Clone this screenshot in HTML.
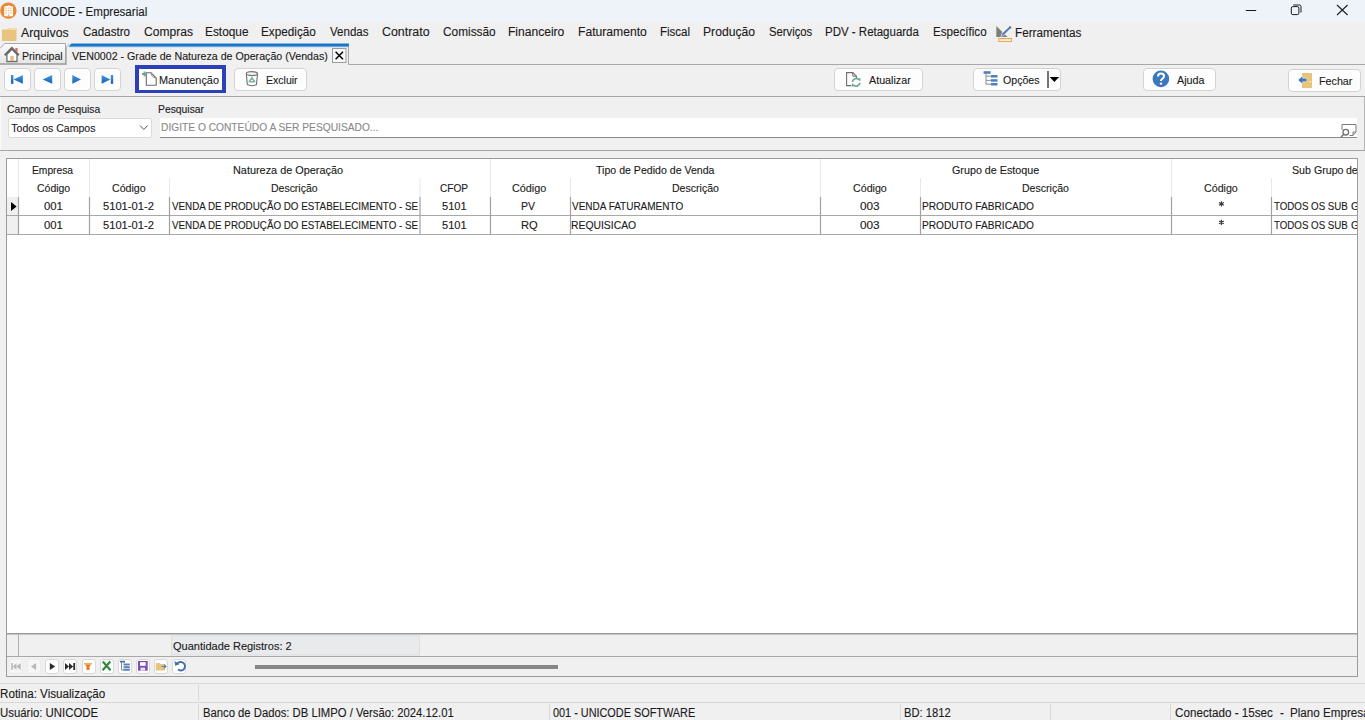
<!DOCTYPE html>
<html><head><meta charset="utf-8"><title>UNICODE - Empresarial</title>
<style>
html,body{margin:0;padding:0;}
body{width:1365px;height:720px;overflow:hidden;position:relative;background:#f0f0f0;font-family:"Liberation Sans",sans-serif;}
.a{position:absolute;box-sizing:border-box;}
.t{position:absolute;white-space:nowrap;line-height:1;transform-origin:0 0;-webkit-text-stroke:0.12px currentColor;}
.btn{position:absolute;box-sizing:border-box;background:#fdfdfd;border:1px solid #d3d3d3;border-radius:4px;}
.nb{position:absolute;box-sizing:border-box;background:#fff;border:1px solid #d8d8d8;border-radius:3px;top:659px;height:15px;width:14px;}
svg{position:absolute;overflow:visible;}
</style></head><body>
<!-- title bar -->
<div class="a" style="left:0;top:0;width:1365px;height:22px;background:#eef2f9"></div>
<svg style="left:0;top:0" width="18" height="22" viewBox="0 0 18 22">
 <circle cx="8.4" cy="10.6" r="8.2" fill="#ea8a2c"/>
 <path d="M4.2 16.2 V6.4 L8.6 5.6 L13 6.4 V16.2 Z" fill="#fff"/>
 <g fill="#f2b77e"><rect x="5.3" y="7.6" width="1.5" height="1.1"/><rect x="7.8" y="7.6" width="1.5" height="1.1"/><rect x="10.3" y="7.6" width="1.5" height="1.1"/><rect x="5.3" y="10" width="1.5" height="1.1"/><rect x="7.8" y="10" width="1.5" height="1.1"/><rect x="10.3" y="10" width="1.5" height="1.1"/><rect x="5.3" y="12.4" width="1.5" height="1.1"/><rect x="7.8" y="12.4" width="1.5" height="1.1"/><rect x="10.3" y="12.4" width="1.5" height="1.1"/><rect x="7.7" y="14.4" width="1.8" height="1.8"/></g>
</svg>
<svg style="left:1240px;top:0" width="125" height="22" viewBox="0 0 125 22">
 <line x1="5.8" y1="10.5" x2="16.2" y2="10.5" stroke="#1a1a1a" stroke-width="1"/>
 <rect x="51.3" y="6.6" width="7.6" height="8" rx="1.5" fill="none" stroke="#1a1a1a" stroke-width="1"/>
 <path d="M53.3 5 H59.5 Q61 5 61 6.5 V12.5" fill="none" stroke="#1a1a1a" stroke-width="1"/>
 <path d="M97 5 L107.6 15 M107.6 5 L97 15" stroke="#1a1a1a" stroke-width="1.05"/>
</svg>
<!-- menu bar -->
<div class="a" style="left:0;top:22px;width:1365px;height:21px;background:#f0f0f0"></div>
<svg style="left:2px;top:27px" width="16" height="15" viewBox="0 0 16 15">
 <path d="M0 2.5 H5.5 L7 1 H14.5 V14 H0 Z" fill="#e9c47f"/>
 <rect x="7" y="1" width="7.5" height="2" fill="#f3dcaa"/>
</svg>
<svg style="left:990px;top:22px" width="24" height="22" viewBox="0 0 24 22">
 <path d="M6.3 4 V15 H17.5 Z" fill="#7d7d7d"/>
 <path d="M10.4 15 L12 10.4 L19.3 3.6 Q20.6 3 21.6 4.2 Q22.2 5.4 21.3 6.4 L14.2 13.6 Z" fill="#fff" opacity="0.8"/>
 <path d="M11.5 14.2 L12.6 11 L19.6 4.4 Q20.6 4 21 4.8 Q21.4 5.6 20.6 6.3 L13.8 13 Z" fill="#4f7fb5"/>
 <path d="M19.3 4.6 L21.2 6.3" stroke="#5f7894" stroke-width="1.4"/>
 <rect x="8.8" y="16.5" width="12.6" height="3" fill="#fdf2c6" stroke="#e9a462" stroke-width="1"/>
 <path d="M11 16.5 V17.5 M13.5 16.5 V17.5 M16 16.5 V17.5 M18.5 16.5 V17.5" stroke="#e9a462" stroke-width="0.8"/>
</svg>
<!-- tab strip -->
<svg style="left:0;top:42px" width="1365" height="24" viewBox="0 0 1365 24">
 <defs><linearGradient id="tg" x1="0" y1="0" x2="0" y2="1"><stop offset="0" stop-color="#fbfbfb"/><stop offset="1" stop-color="#e4e4e4"/></linearGradient></defs>
 <path d="M0 22.5 V6.5 L4.7 1.3 H65.5 V22.5 Z" fill="url(#tg)"/>
 <path d="M0 6.5 L4.7 1.5 H65.5 V22.5" fill="none" stroke="#a8a8a8" stroke-width="1"/>
 <line x1="0" y1="22" x2="67" y2="22" stroke="#9a9a9a" stroke-width="1.6"/>
 <path d="M66.5 22.5 V5 L70 1.5" fill="none" stroke="#b8b8b8" stroke-width="1"/>
 <path d="M68.5 4.8 L71.5 1.5 H349 V4.8 Z" fill="#1976c9"/>
 <line x1="70" y1="5.3" x2="348.5" y2="5.3" stroke="#cfe3f5" stroke-width="1"/>
 <line x1="348.5" y1="4" x2="348.5" y2="22.5" stroke="#a8a8a8" stroke-width="1"/>
 <line x1="348.5" y1="22.5" x2="1365" y2="22.5" stroke="#a8a8a8" stroke-width="1"/>
 <!-- close box -->
 <rect x="332.5" y="6.5" width="13.5" height="14" fill="#f7f7f7" stroke="#9c9c9c" stroke-width="1"/>
 <path d="M335.6 9.8 L343 17.2 M343 9.8 L335.6 17.2" stroke="#000" stroke-width="1.5"/>
</svg>
<svg style="left:4px;top:46px" width="17" height="17" viewBox="0 0 17 17">
 <rect x="11.3" y="2" width="2.3" height="3.6" fill="#d9715a"/>
 <path d="M2.9 8.3 V15.5 H13 V8.3 L7.9 3.2 Z" fill="#fff" stroke="#707070" stroke-width="1.3"/>
 <path d="M0.8 9.3 L7.8 2 L14.8 9.3" fill="none" stroke="#6a6a6a" stroke-width="2.1"/>
 <rect x="6.3" y="10" width="3.4" height="5" fill="#e3bd83"/>
</svg>
<!-- toolbar -->
<div class="a" style="left:0;top:96px;width:1365px;height:1px;background:#a5a5a5"></div>
<div class="btn" style="left:4px;top:68px;width:27px;height:23px"></div>
<div class="btn" style="left:34px;top:68px;width:27px;height:23px"></div>
<div class="btn" style="left:64px;top:68px;width:27px;height:23px"></div>
<div class="btn" style="left:94px;top:68px;width:27px;height:23px"></div>
<svg style="left:0;top:64px" width="125" height="32" viewBox="0 0 125 32">
 <defs><linearGradient id="bg1" x1="0" y1="0" x2="0" y2="1"><stop offset="0" stop-color="#4a97e0"/><stop offset="1" stop-color="#0f5fb8"/></linearGradient></defs>
 <g fill="url(#bg1)">
 <rect x="11" y="11" width="2.4" height="8.8"/><path d="M13.6 15.4 L22.9 11 V19.8 Z"/>
 <path d="M42.6 15.4 L52.2 11 V19.8 Z"/>
 <path d="M81 15.4 L72.3 11 V19.8 Z"/>
 <path d="M110.3 15.4 L101.6 11 V19.8 Z"/><rect x="110.8" y="11" width="2.4" height="8.8"/>
 </g>
</svg>
<div class="a" style="left:135px;top:65px;width:91px;height:28px;border:4px solid #2e40b8;border-bottom-width:3.5px;background:#fff"></div>
<svg style="left:140px;top:70px" width="18" height="18" viewBox="0 0 18 18">
 <path d="M6.3 2.8 H11 L16.2 8 V15.2 H6.3 Z" fill="#fff" stroke="#6a6a6a" stroke-width="1.1"/>
 <path d="M11 2.8 Q11.3 7.6 16.2 8" fill="none" stroke="#8a8a8a" stroke-width="0.9"/>
 <path d="M4.6 1.4 V6.6 M2 4 H7.2" stroke="#6aa98c" stroke-width="1.9"/>
</svg>
<div class="btn" style="left:234px;top:68px;width:73px;height:23px"></div>
<svg style="left:244px;top:70px" width="16" height="18" viewBox="0 0 16 18">
 <path d="M2.3 3.8 L3.3 14.6 Q7.9 16.8 12.5 14.6 L13.5 3.8" fill="#fff" stroke="#707070" stroke-width="1.1"/>
 <ellipse cx="7.9" cy="3.6" rx="5.6" ry="2" fill="#f4f4f4" stroke="#707070" stroke-width="1.1"/>
 <path d="M7.9 7.6 L10.6 11.8 H5.2 Z" fill="#e9f6f0" stroke="#82b7a1" stroke-width="1.6" stroke-linejoin="round"/>
</svg>
<div class="btn" style="left:834px;top:68px;width:89px;height:23px"></div>
<svg style="left:844px;top:70px" width="19" height="18" viewBox="0 0 19 18">
 <path d="M7.5 15.6 H2.6 V2.6 H8.8 L12.4 6.2 V8.5" fill="#fff" stroke="#6d6d6d" stroke-width="1.1"/>
 <path d="M8.8 2.6 V6.2 H12.4" fill="none" stroke="#6d6d6d" stroke-width="1"/>
 <path d="M8.4 11.8 A3.8 3.8 0 0 1 14.8 9.6" fill="none" stroke="#6aa98c" stroke-width="1.7"/>
 <path d="M13.2 8.4 L16.6 8.2 L16.2 11.6 Z" fill="#6aa98c"/>
 <path d="M16 12.8 A3.8 3.8 0 0 1 9.6 15" fill="none" stroke="#6aa98c" stroke-width="1.7"/>
 <path d="M11.2 16.2 L7.8 16.4 L8.2 13 Z" fill="#6aa98c"/>
</svg>
<div class="btn" style="left:973px;top:68px;width:88px;height:23px"></div>
<svg style="left:980px;top:70px" width="19" height="18" viewBox="0 0 19 18">
 <rect x="3.6" y="1.2" width="7" height="2.6" fill="#4a82bf"/>
 <path d="M6 3.8 V14.2 H10.9 M6 6.2 H10.9 M6 10.4 H10.9" fill="none" stroke="#8c8c8c" stroke-width="1"/>
 <rect x="10.9" y="5" width="6.6" height="2.5" fill="#4a82bf"/>
 <rect x="10.9" y="9.2" width="6.6" height="2.5" fill="#4a82bf"/>
 <rect x="10.9" y="13" width="6.6" height="2.5" fill="#4a82bf"/>
</svg>
<div class="a" style="left:1047px;top:71px;width:2px;height:16.6px;background:#747474"></div>
<svg style="left:1049px;top:76px" width="12" height="8" viewBox="0 0 12 8">
 <path d="M0.7 1.1 H10.1 L5.4 6 Z" fill="#000"/>
</svg>
<div class="btn" style="left:1143px;top:68px;width:73px;height:23px"></div>
<svg style="left:1152px;top:70px" width="18" height="18" viewBox="0 0 18 18">
 <circle cx="8.9" cy="8.9" r="8.3" fill="#3b78bd"/>
 <path d="M6 6.6 Q6 3.6 9 3.6 Q12 3.6 12 6.3 Q12 8 10 9 Q9 9.6 9 11" fill="none" stroke="#fff" stroke-width="2"/>
 <circle cx="9" cy="13.6" r="1.2" fill="#fff"/>
</svg>
<div class="btn" style="left:1288px;top:69px;width:73px;height:23px"></div>
<svg style="left:1297px;top:72px" width="17" height="17" viewBox="0 0 17 17">
 <rect x="5" y="1" width="10" height="15" fill="#e8c47a"/>
 <rect x="12.6" y="9.2" width="1.2" height="1.2" fill="#fff"/>
 <path d="M1.2 8 L5.4 4.2 V6.4 H9.6 V9.6 H5.4 V11.8 Z" fill="#4177b5" stroke="#fff" stroke-width="0.9" paint-order="stroke"/>
</svg>
<!-- search panel -->
<div class="a" style="left:0;top:97px;width:1px;height:53px;background:#fafafa"></div>
<div class="a" style="left:1364px;top:97px;width:1px;height:53px;background:#b4b4b4"></div>
<div class="a" style="left:0;top:150px;width:1365px;height:1px;background:#a5a5a5"></div>
<div class="a" style="left:8px;top:118px;width:144px;height:20px;background:#fff;border:1px solid #dadada;border-radius:2px"></div>
<svg style="left:138px;top:123px" width="12" height="9" viewBox="0 0 12 9">
 <path d="M2 2.5 L5.8 6.5 L9.6 2.5" fill="none" stroke="#555" stroke-width="1"/>
</svg>
<div class="a" style="left:160px;top:118px;width:1197px;height:20px;background:#fff;border-bottom:1px solid #8a8a8a"></div>
<svg style="left:1339px;top:122px" width="19" height="16" viewBox="0 0 19 16">
 <path d="M3 8 V2.5 H17 V10 L14 13.5 H10.5" fill="none" stroke="#7a7a7a" stroke-width="1"/>
 <path d="M17 10 H14 V13.5" fill="none" stroke="#7a7a7a" stroke-width="1"/>
 <circle cx="6.8" cy="10.2" r="2.8" fill="none" stroke="#707070" stroke-width="1.3"/>
 <path d="M4.8 12.2 L2 15" stroke="#707070" stroke-width="1.5"/>
</svg>
<!-- grid -->
<div class="a" style="left:6px;top:158px;width:1352px;height:519px;border:1px solid #9b9b9b;background:#fff"></div>
<svg style="left:0;top:0" width="1365" height="720" viewBox="0 0 1365 720">
 <!-- header dividers -->
 <g stroke="#e8e8e8" stroke-width="1">
  <line x1="18.5" y1="159" x2="18.5" y2="197"/>
  <line x1="89.5" y1="159" x2="89.5" y2="197"/>
  <line x1="490.5" y1="159" x2="490.5" y2="197"/>
  <line x1="820.5" y1="159" x2="820.5" y2="197"/>
  <line x1="1171.5" y1="159" x2="1171.5" y2="197"/>
  <line x1="169.5" y1="178" x2="169.5" y2="197"/>
  <line x1="420" y1="178" x2="420" y2="197"/>
  <line x1="570.5" y1="178" x2="570.5" y2="197"/>
  <line x1="920.5" y1="178" x2="920.5" y2="197"/>
  <line x1="1271.5" y1="178" x2="1271.5" y2="197"/>
 </g>
 <rect x="7" y="197" width="11" height="37" fill="#f0f0f0"/>
 <g stroke="#a8a8a8" stroke-width="1">
  <line x1="7" y1="215.5" x2="1357" y2="215.5"/>
  <line x1="7" y1="234.5" x2="1357" y2="234.5"/>
 </g>
 <g stroke="#a0a0a0" stroke-width="1.2">
  <line x1="18.5" y1="197" x2="18.5" y2="234"/>
  <line x1="89.5" y1="197" x2="89.5" y2="234"/>
  <line x1="169.5" y1="197" x2="169.5" y2="234"/>
  <line x1="420" y1="197" x2="420" y2="234"/>
  <line x1="490.5" y1="197" x2="490.5" y2="234"/>
  <line x1="570.5" y1="197" x2="570.5" y2="234"/>
  <line x1="820.5" y1="197" x2="820.5" y2="234"/>
  <line x1="920.5" y1="197" x2="920.5" y2="234"/>
  <line x1="1171.5" y1="197" x2="1171.5" y2="234"/>
  <line x1="1271.5" y1="197" x2="1271.5" y2="234"/>
 </g>
 <path d="M11 202 L16.6 206.5 L11 211 Z" fill="#000"/>
 <g stroke="#333" stroke-width="1.1"><path d="M1221.4 201.3 V206.6 M1219 202.6 L1223.8 205.3 M1219 205.3 L1223.8 202.6"/>
 <path d="M1221.4 219.7 V225 M1219 221 L1223.8 223.7 M1219 223.7 L1223.8 221"/></g>
 <!-- footer -->
 <rect x="7" y="634" width="1350" height="42" fill="#f0f0f0"/>
 <line x1="7" y1="633.8" x2="1357" y2="633.8" stroke="#9a9a9a" stroke-width="1.6"/>
 <line x1="18.5" y1="634" x2="18.5" y2="656" stroke="#b0b0b0" stroke-width="1"/>
 <rect x="171.5" y="636" width="248" height="19" fill="#e8eaec" stroke="#dcdfe2" stroke-width="1"/>
 <line x1="7" y1="656.5" x2="1357" y2="656.5" stroke="#a8a8a8" stroke-width="1"/>
 <rect x="255" y="665" width="303" height="4" fill="#878787"/>
</svg>
<!-- nav buttons bottom -->
<div class="nb" style="left:9px;border-color:#ececec;background:#f6f6f6"></div>
<div class="nb" style="left:27px;border-color:#ececec;background:#f6f6f6"></div>
<div class="nb" style="left:45px"></div>
<div class="nb" style="left:63px"></div>
<div class="nb" style="left:81.5px"></div>
<div class="nb" style="left:99.5px"></div>
<div class="nb" style="left:117.5px"></div>
<div class="nb" style="left:135.5px"></div>
<div class="nb" style="left:154px"></div>
<div class="nb" style="left:172px"></div>
<svg style="left:0;top:656px" width="200" height="20" viewBox="0 0 200 20">
 <g fill="#b8b8b8"><rect x="11.2" y="7" width="1.6" height="7"/><path d="M12.8 10.5 L16.5 7 V14 Z M16.5 10.5 L20.7 7 V14 Z"/>
 <path d="M31 10.5 L36.1 7 V14 Z"/></g>
 <g fill="#2b2b2b"><path d="M55.2 10.5 L49.8 7 V14 Z"/>
 <path d="M69 10.5 L65 7 V14 Z M73.2 10.5 L69 7 V14 Z"/><rect x="73.3" y="7" width="1.8" height="7"/></g>
 <path d="M83.8 7 H92.2 L89.5 10.5 V14 H86.5 V10.5 Z" fill="#e8791c"/>
 <rect x="84.5" y="7.3" width="7" height="1.3" fill="#f7c27a"/>
 <path d="M102.8 5.5 L110.5 14.3 M110.3 5.5 L102.6 14.3" stroke="#2e8b3c" stroke-width="2.2"/>
 <rect x="120" y="4.8" width="5" height="1.8" fill="#3e72b0"/>
 <path d="M121.5 6.5 V14 H124" fill="none" stroke="#8a8a8a" stroke-width="1"/>
 <g fill="#5b86bd"><rect x="123.5" y="7.5" width="6.3" height="2"/><rect x="123.5" y="10.2" width="6.3" height="2"/><rect x="123.5" y="12.8" width="6.3" height="2"/></g>
 <rect x="138" y="5" width="9.7" height="9.7" fill="#7b4fae"/>
 <rect x="140" y="6.2" width="5.7" height="3.6" fill="#fff"/>
 <rect x="140.5" y="11.6" width="4.6" height="3.1" fill="#e9dcf5"/>
 <path d="M155.8 7 H159.5 L160.5 8 H165 V14.5 H155.8 Z" fill="#e8c47e"/>
 <path d="M161.5 10.5 L166 10.5 M164.2 8.6 L166 10.5 L164.2 12.4" stroke="#5b7fb0" stroke-width="1.2" fill="none"/>
 <path d="M176.8 8.4 A4.3 4.3 0 1 1 178 13.6" fill="none" stroke="#3f6fae" stroke-width="1.9"/>
 <path d="M174.5 5 L175.2 9.8 L179.6 8.2 Z" fill="#3f6fae"/>
</svg>
<!-- status bar -->
<div class="a" style="left:0;top:683px;width:1365px;height:1px;background:#d9d9d9"></div>
<div class="a" style="left:0;top:702px;width:1365px;height:1px;background:#d9d9d9"></div>
<div class="a" style="left:198px;top:685px;width:1px;height:16px;background:#d9d9d9"></div>
<div class="a" style="left:198px;top:704px;width:1px;height:16px;background:#d9d9d9"></div>
<div class="a" style="left:549px;top:704px;width:1px;height:16px;background:#d9d9d9"></div>
<div class="a" style="left:900px;top:704px;width:1px;height:16px;background:#d9d9d9"></div>
<div class="a" style="left:1050px;top:704px;width:1px;height:16px;background:#d9d9d9"></div>
<div class="a" style="left:1170px;top:704px;width:1px;height:16px;background:#d9d9d9"></div>
<span class="t" style="left:21.54px;top:6.24px;font-size:12px;color:#1b1b1b;transform:scaleX(0.9630)">UNICODE - Empresarial</span>
<span class="t" style="left:20.50px;top:26.84px;font-size:12px;color:#1b1b1b;transform:scaleX(1.0205)">Arquivos</span>
<span class="t" style="left:82.52px;top:26.34px;font-size:12px;color:#1b1b1b;transform:scaleX(0.9634)">Cadastro</span>
<span class="t" style="left:143.50px;top:26.34px;font-size:12px;color:#1b1b1b;transform:scaleX(1.0052)">Compras</span>
<span class="t" style="left:205.01px;top:26.34px;font-size:12px;color:#1b1b1b;transform:scaleX(0.9882)">Estoque</span>
<span class="t" style="left:261.32px;top:26.34px;font-size:12px;color:#1b1b1b;transform:scaleX(0.9798)">Expedição</span>
<span class="t" style="left:330.10px;top:26.34px;font-size:12px;color:#1b1b1b;transform:scaleX(0.9610)">Vendas</span>
<span class="t" style="left:381.98px;top:26.34px;font-size:12px;color:#1b1b1b;transform:scaleX(1.0333)">Contrato</span>
<span class="t" style="left:443.01px;top:26.34px;font-size:12px;color:#1b1b1b;transform:scaleX(0.9867)">Comissão</span>
<span class="t" style="left:508.49px;top:26.34px;font-size:12px;color:#1b1b1b;transform:scaleX(1.0055)">Financeiro</span>
<span class="t" style="left:578.09px;top:26.34px;font-size:12px;color:#1b1b1b;transform:scaleX(1.0120)">Faturamento</span>
<span class="t" style="left:660.24px;top:26.34px;font-size:12px;color:#1b1b1b;transform:scaleX(0.9593)">Fiscal</span>
<span class="t" style="left:703.19px;top:26.34px;font-size:12px;color:#1b1b1b;transform:scaleX(1.0120)">Produção</span>
<span class="t" style="left:769.03px;top:26.34px;font-size:12px;color:#1b1b1b;transform:scaleX(0.9400)">Serviços</span>
<span class="t" style="left:825.04px;top:26.34px;font-size:12px;color:#1b1b1b;transform:scaleX(0.9577)">PDV - Retaguarda</span>
<span class="t" style="left:932.93px;top:26.34px;font-size:12px;color:#1b1b1b;transform:scaleX(0.9685)">Específico</span>
<span class="t" style="left:1015.03px;top:26.84px;font-size:12px;color:#1b1b1b;transform:scaleX(0.9744)">Ferramentas</span>
<span class="t" style="left:22.04px;top:51.49px;font-size:11px;color:#1b1b1b;transform:scaleX(0.9630)">Principal</span>
<span class="t" style="left:72.00px;top:51.09px;font-size:11px;color:#1b1b1b;transform:scaleX(0.9685)">VEN0002 - Grade de Natureza de Operação (Vendas)</span>
<span class="t" style="left:159.41px;top:75.19px;font-size:11px;color:#1b1b1b;transform:scaleX(0.9907)">Manutenção</span>
<span class="t" style="left:265.54px;top:75.19px;font-size:11px;color:#1b1b1b;transform:scaleX(0.9575)">Excluir</span>
<span class="t" style="left:869.00px;top:75.19px;font-size:11px;color:#1b1b1b;transform:scaleX(0.9754)">Atualizar</span>
<span class="t" style="left:1002.72px;top:75.19px;font-size:11px;color:#1b1b1b;transform:scaleX(0.9649)">Opções</span>
<span class="t" style="left:1176.80px;top:75.19px;font-size:11px;color:#1b1b1b;transform:scaleX(0.9770)">Ajuda</span>
<span class="t" style="left:1319.22px;top:75.99px;font-size:11px;color:#1b1b1b;transform:scaleX(0.9758)">Fechar</span>
<span class="t" style="left:6.76px;top:103.81px;font-size:10.5px;color:#1b1b1b;transform:scaleX(0.9856)">Campo de Pesquisa</span>
<span class="t" style="left:158.06px;top:103.81px;font-size:10.5px;color:#1b1b1b;transform:scaleX(0.9858)">Pesquisar</span>
<span class="t" style="left:11.35px;top:122.81px;font-size:10.5px;color:#1b1b1b;transform:scaleX(1.0000)">Todos os Campos</span>
<span class="t" style="left:160.67px;top:122.31px;font-size:10.5px;color:#8a8a8a;transform:scaleX(0.9727)">DIGITE O CONTEÚDO A SER PESQUISADO...</span>
<span class="t" style="left:32.27px;top:164.51px;font-size:10.5px;color:#1b1b1b;transform:scaleX(0.9770)">Empresa</span>
<span class="t" style="left:233.42px;top:164.51px;font-size:10.5px;color:#1b1b1b;transform:scaleX(1.0362)">Natureza de Operação</span>
<span class="t" style="left:596.15px;top:164.51px;font-size:10.5px;color:#1b1b1b;transform:scaleX(1.0081)">Tipo de Pedido de Venda</span>
<span class="t" style="left:952.29px;top:164.51px;font-size:10.5px;color:#1b1b1b;transform:scaleX(1.0231)">Grupo de Estoque</span>
<span class="t" style="left:1292.19px;top:164.51px;font-size:10.5px;color:#1b1b1b;transform:scaleX(1.0140)">Sub Grupo</span>
<span class="t" style="left:36.90px;top:182.91px;font-size:10.5px;color:#1b1b1b;transform:scaleX(0.9969)">Código</span>
<span class="t" style="left:111.59px;top:182.91px;font-size:10.5px;color:#1b1b1b;transform:scaleX(1.0123)">Código</span>
<span class="t" style="left:512.28px;top:182.91px;font-size:10.5px;color:#1b1b1b;transform:scaleX(1.0308)">Código</span>
<span class="t" style="left:853.39px;top:182.91px;font-size:10.5px;color:#1b1b1b;transform:scaleX(1.0154)">Código</span>
<span class="t" style="left:1204.19px;top:182.91px;font-size:10.5px;color:#1b1b1b;transform:scaleX(1.0154)">Código</span>
<span class="t" style="left:270.75px;top:182.91px;font-size:10.5px;color:#1b1b1b;transform:scaleX(0.9978)">Descrição</span>
<span class="t" style="left:671.55px;top:182.91px;font-size:10.5px;color:#1b1b1b;transform:scaleX(1.0044)">Descrição</span>
<span class="t" style="left:1022.45px;top:182.91px;font-size:10.5px;color:#1b1b1b;transform:scaleX(1.0044)">Descrição</span>
<span class="t" style="left:440.32px;top:182.91px;font-size:10.5px;color:#1b1b1b;transform:scaleX(0.9628)">CFOP</span>
<span class="t" style="left:43.66px;top:201.21px;font-size:10.5px;color:#1b1b1b;transform:scaleX(1.0788)">001</span>
<span class="t" style="left:103.47px;top:201.21px;font-size:10.5px;color:#1b1b1b;transform:scaleX(1.0631)">5101-01-2</span>
<span class="t" style="left:172.00px;top:201.21px;font-size:10.5px;color:#1b1b1b;transform:scaleX(0.9346)">VENDA DE PRODUÇÃO DO ESTABELECIMENTO - SE</span>
<span class="t" style="left:441.87px;top:201.21px;font-size:10.5px;color:#1b1b1b;transform:scaleX(1.0533)">5101</span>
<span class="t" style="left:860.44px;top:201.21px;font-size:10.5px;color:#1b1b1b;transform:scaleX(1.1212)">003</span>
<span class="t" style="left:922.48px;top:201.21px;font-size:10.5px;color:#1b1b1b;transform:scaleX(0.9656)">PRODUTO FABRICADO</span>
<span class="t" style="left:1273.77px;top:201.21px;font-size:10.5px;color:#1b1b1b;transform:scaleX(0.9253)">TODOS OS SUB</span>
<span class="t" style="left:43.66px;top:220.41px;font-size:10.5px;color:#1b1b1b;transform:scaleX(1.0788)">001</span>
<span class="t" style="left:103.47px;top:220.41px;font-size:10.5px;color:#1b1b1b;transform:scaleX(1.0631)">5101-01-2</span>
<span class="t" style="left:172.00px;top:220.41px;font-size:10.5px;color:#1b1b1b;transform:scaleX(0.9346)">VENDA DE PRODUÇÃO DO ESTABELECIMENTO - SE</span>
<span class="t" style="left:441.87px;top:220.41px;font-size:10.5px;color:#1b1b1b;transform:scaleX(1.0533)">5101</span>
<span class="t" style="left:860.44px;top:220.41px;font-size:10.5px;color:#1b1b1b;transform:scaleX(1.1212)">003</span>
<span class="t" style="left:922.48px;top:220.41px;font-size:10.5px;color:#1b1b1b;transform:scaleX(0.9656)">PRODUTO FABRICADO</span>
<span class="t" style="left:1273.77px;top:220.41px;font-size:10.5px;color:#1b1b1b;transform:scaleX(0.9253)">TODOS OS SUB</span>
<span class="t" style="left:521.25px;top:201.21px;font-size:10.5px;color:#1b1b1b;transform:scaleX(1.0038)">PV</span>
<span class="t" style="left:521.20px;top:220.41px;font-size:10.5px;color:#1b1b1b;transform:scaleX(1.0621)">RQ</span>
<span class="t" style="left:572.20px;top:201.21px;font-size:10.5px;color:#1b1b1b;transform:scaleX(0.9511)">VENDA FATURAMENTO</span>
<span class="t" style="left:571.26px;top:220.41px;font-size:10.5px;color:#1b1b1b;transform:scaleX(0.9884)">REQUISICAO</span>
<span class="t" style="left:173.00px;top:640.79px;font-size:11px;color:#1b1b1b;transform:scaleX(1.0000)">Quantidade Registros: 2</span>
<span class="t" style="left:-0.47px;top:688.24px;font-size:12px;color:#1b1b1b;transform:scaleX(0.9701)">Rotina: Visualização</span>
<span class="t" style="left:-0.45px;top:707.24px;font-size:12px;color:#1b1b1b;transform:scaleX(0.9500)">Usuário: UNICODE</span>
<span class="t" style="left:202.56px;top:707.24px;font-size:12px;color:#1b1b1b;transform:scaleX(0.9395)">Banco de Dados: DB LIMPO / Versão: 2024.12.01</span>
<span class="t" style="left:553.35px;top:707.24px;font-size:12px;color:#1b1b1b;transform:scaleX(0.9058)">001 - UNICODE SOFTWARE</span>
<span class="t" style="left:903.67px;top:707.24px;font-size:12px;color:#1b1b1b;transform:scaleX(0.9320)">BD: 1812</span>
<span class="t" style="left:1175.01px;top:707.24px;font-size:12px;color:#1b1b1b;transform:scaleX(0.9720)">Conectado - 15sec</span>
<span class="t" style="left:1279.51px;top:707.24px;font-size:12px;color:#1b1b1b;transform:scaleX(0.9701)">-</span>
<span class="t" style="left:1290.03px;top:707.24px;font-size:12px;color:#1b1b1b;transform:scaleX(0.9701)">Plano Empresarial</span>
<div class="a" style="left:7px;top:159px;width:1350px;height:80px;overflow:hidden">
<div class="a" style="left:-7px;top:-159px;width:1365px;height:720px">
<span class="t" style="left:1345.80px;top:164.51px;font-size:10.5px;color:#1b1b1b;transform:scaleX(1.0044)">de Estoque</span>
<span class="t" style="left:1350.80px;top:201.21px;font-size:10.5px;color:#1b1b1b;transform:scaleX(1.0044)">GRUPOS</span>
<span class="t" style="left:1350.80px;top:220.41px;font-size:10.5px;color:#1b1b1b;transform:scaleX(1.0044)">GRUPOS</span>
</div></div>
</body></html>
